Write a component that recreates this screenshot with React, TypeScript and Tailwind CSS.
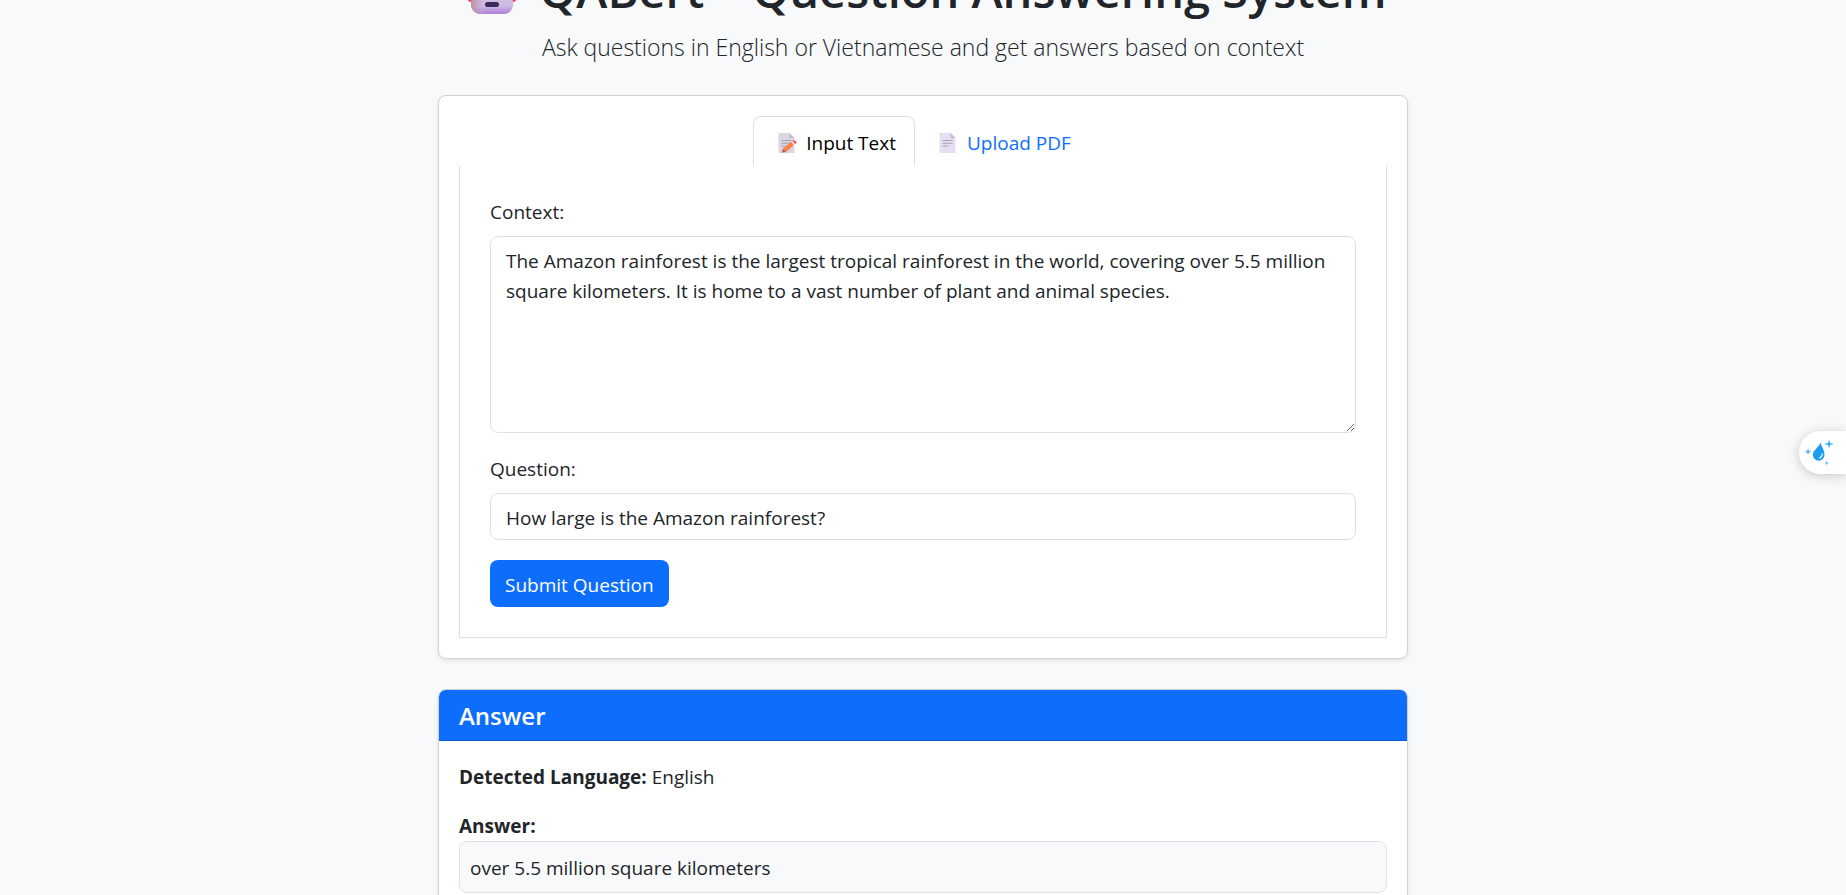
import React from "react";

function RobotIcon() {
  return (
    <svg viewBox="0 0 50 50" className="h-[50px] w-[66px]" aria-hidden="true">
      <defs>
        <linearGradient id="head" x1="0" y1="0" x2="0" y2="1">
          <stop offset="0" stopColor="#d9c9e2" />
          <stop offset="0.8" stopColor="#cdb9e2" />
          <stop offset="1" stopColor="#ac7fd6" />
        </linearGradient>
        <linearGradient id="shade" x1="0" y1="0" x2="1" y2="0">
          <stop offset="0" stopColor="#b98f98" />
          <stop offset="0.35" stopColor="#c9b0cf" stopOpacity="0" />
        </linearGradient>
      </defs>
      <rect x="1" y="20" width="6" height="17" rx="3" fill="#f8294f" />
      <rect x="43" y="20" width="6" height="17" rx="3" fill="#f8294f" />
      <rect x="23" y="2" width="4" height="10" fill="#b4a3bf" />
      <circle cx="25" cy="4" r="4" fill="#f8294f" />
      <rect x="4" y="10" width="42" height="39" rx="9" fill="url(#head)" />
      <rect x="4" y="10" width="42" height="39" rx="9" fill="url(#shade)" />
      <circle cx="16" cy="24" r="5" fill="#3b3050" />
      <circle cx="34" cy="24" r="5" fill="#3b3050" />
      <rect x="18" y="37" width="14" height="5" rx="2.5" fill="#382b58" />
    </svg>
  );
}

function PageIcon({ pencil }: { pencil?: boolean }) {
  return (
    <svg viewBox="0 0 20 20" className="h-5 w-5" aria-hidden="true">
      <path d="M0.5 0H11.5L16.5 5V20H0.5Z" fill={pencil ? "#dcd5e3" : "#e7ddf0"} />
      <path d="M11.5 0V5H16.5Z" fill="#c3bacb" />
      <path d="M3.5 7.5H13.5M3.5 10.3H13.5M3.5 13H9.5" stroke="#aaa0b3" strokeWidth="1.1" />
      {pencil && (
        <g>
          <path d="M4 19.5L5 15.8L13 8.8L16 12L8 19Z" fill="#fd8140" />
          <path d="M4 19.5L5 15.8L8 19Z" fill="#b3636a" />
          <path d="M13 8.8L14.2 7.8L17.2 11L16 12Z" fill="#f3e6ea" />
          <path d="M14.2 7.8Q16 6.6 17.8 8.2T17.2 11Z" fill="#f8544f" />
        </g>
      )}
    </svg>
  );
}

function FloatingButton() {
  return (
    <button
      type="button"
      aria-label="Assistant"
      className="fixed top-[431px] right-0 flex h-[43px] w-[47px] items-center rounded-l-full bg-white pl-1.5 shadow-[0_2px_12px_rgba(0,0,0,0.2)]"
    >
      <svg viewBox="0 0 30 28" className="h-7 w-[30px]" aria-hidden="true">
        <path d="M15.5 3.5C17 9 19.5 11 19.5 16A5.8 5.8 0 0 1 7.9 16C7.9 11 13.5 9 15.5 3.5Z" fill="#1d9bf0" />
        <path d="M17.3 14.5Q17.3 18 14.3 19.3" stroke="#fff" strokeWidth="1.1" fill="none" />
        <path d="M24 0.5L25 4L29 5L25 6L24 9.5L23 6L19 5L23 4Z" fill="#35b0f6" />
        <path d="M3 9.5L3.8 12L6.5 12.8L3.8 13.6L3 16L2.2 13.6L-0.5 12.8L2.2 12Z" fill="#35b0f6" />
        <path d="M21.7 21.5L22.2 23.4L24 24L22.2 24.6L21.7 26.5L21.2 24.6L19.4 24L21.2 23.4Z" fill="#35b0f6" />
      </svg>
    </button>
  );
}

export default function App() {
  return (
    <div className="h-screen overflow-hidden bg-[#f8f9fa] font-['Open_Sans',sans-serif] text-[19px] leading-[30px] text-[#212529]">
      <main className="mx-auto -mt-[40px] max-w-[970px]">
        <header className="mb-[30px] text-center">
          <h1 className="mb-[9px] flex items-center justify-center gap-3.5 text-[47px] leading-[60px] font-semibold whitespace-nowrap">
            <RobotIcon />
            QABert – Question Answering System
          </h1>
          <p className="text-[23px] leading-[36px] font-light">
            Ask questions in English or Vietnamese and get answers based on context
          </p>
        </header>

        <section className="rounded-lg border border-[#d0d2d4] bg-white p-5 shadow-[0_2px_5px_rgba(0,0,0,0.09)]">
          <div role="tablist" className="flex justify-center">
            <button
              type="button"
              role="tab"
              aria-selected="true"
              className="flex h-[50px] items-center gap-2 rounded-t-lg border border-b-0 border-[#dee2e6] pt-0.5 pr-[18px] pl-6 text-black"
            >
              <PageIcon pencil />
              Input Text
            </button>
            <button
              type="button"
              role="tab"
              aria-selected="false"
              className="flex h-[50px] items-center gap-2 pt-[3px] pr-[22px] pl-6 text-[#0d6efd]"
            >
              <PageIcon />
              Upload PDF
            </button>
          </div>
          <form className="border border-t-0 border-[#dee2e6] p-[30px]" onSubmit={(e) => e.preventDefault()}>
            <label htmlFor="context" className="mb-[9px] block pt-px">Context:</label>
            <textarea
              id="context"
              spellCheck={false}
              className="mb-5 block h-[197px] w-full rounded-lg border border-[#dee2e6] bg-white px-[15px] py-[9px]"
              defaultValue="The Amazon rainforest is the largest tropical rainforest in the world, covering over 5.5 million square kilometers. It is home to a vast number of plant and animal species."
            />
            <label htmlFor="question" className="mb-[9px] block pt-px">Question:</label>
            <input
              id="question"
              type="text"
              className="mb-5 block h-[47px] w-full rounded-lg border border-[#dee2e6] bg-white px-[15px] pt-0.5"
              defaultValue="How large is the Amazon rainforest?"
            />
            <button type="submit" className="h-[47px] rounded-lg bg-[#0d6efd] px-[15px] pt-0.5 text-white">
              Submit Question
            </button>
          </form>
        </section>

        <section className="mt-[30px] rounded-lg border border-[#d0d2d4] bg-white shadow-[0_2px_5px_rgba(0,0,0,0.09)]">
          <h2 className="rounded-t-[7px] border-b border-[#0b5ed7] bg-[#0d6efd] px-5 pt-[11px] pb-[9px] text-[24px] leading-[30px] font-semibold text-white">
            Answer
          </h2>
          <div className="p-5">
            <p className="mb-[19px] pt-px">
              <strong>Detected Language:</strong> English
            </p>
            <strong className="block pt-px leading-[29px]">Answer:</strong>
            <div className="rounded-lg border border-[#dee2e6] bg-[#f8f9fa] px-2.5 pt-[11px] pb-[9px]">over 5.5 million square kilometers</div>
          </div>
        </section>
      </main>
      <FloatingButton />
    </div>
  );
}
